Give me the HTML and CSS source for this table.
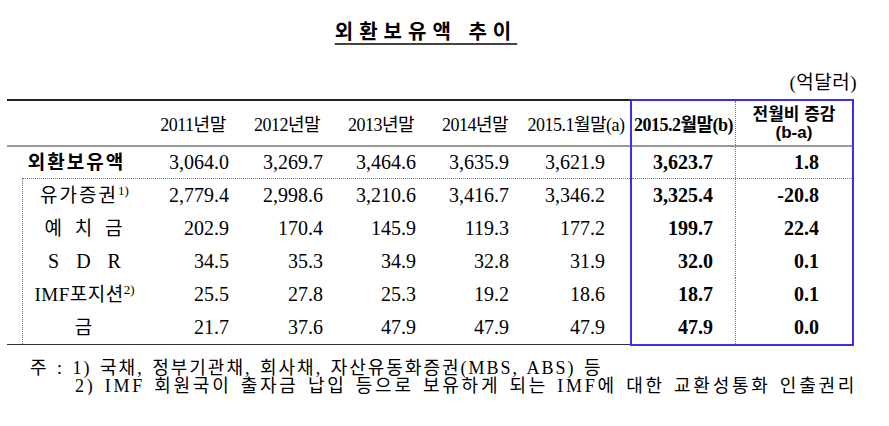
FILE: index.html
```html
<!DOCTYPE html>
<html lang="ko">
<head>
<meta charset="utf-8">
<title>외환보유액 추이</title>
<link rel="stylesheet" href="styles.css">
</head>
<body>
<div class="page">
  <h1 class="title"><span>외환보유액 추이</span></h1>
  <div class="unit">(억달러)</div>
  <div class="table">
    <div class="main">
      <div class="row head">
        <div class="cell"></div>
        <div class="cell hd">2011년말</div>
        <div class="cell hd">2012년말</div>
        <div class="cell hd">2013년말</div>
        <div class="cell hd">2014년말</div>
        <div class="cell hd">2015.1월말(a)</div>
      </div>
      <div class="row total">
        <div class="cell label strong">외환보유액</div>
        <div class="cell num">3,064.0</div>
        <div class="cell num">3,269.7</div>
        <div class="cell num">3,464.6</div>
        <div class="cell num">3,635.9</div>
        <div class="cell num">3,621.9</div>
      </div>
      <div class="sub">
        <div class="row">
          <div class="cell label">유가증권<sup>1)</sup></div>
          <div class="cell num">2,779.4</div>
          <div class="cell num">2,998.6</div>
          <div class="cell num">3,210.6</div>
          <div class="cell num">3,416.7</div>
          <div class="cell num">3,346.2</div>
        </div>
        <div class="row">
          <div class="cell label spaced">예 치 금</div>
          <div class="cell num">202.9</div>
          <div class="cell num">170.4</div>
          <div class="cell num">145.9</div>
          <div class="cell num">119.3</div>
          <div class="cell num">177.2</div>
        </div>
        <div class="row">
          <div class="cell label sdr">S D R</div>
          <div class="cell num">34.5</div>
          <div class="cell num">35.3</div>
          <div class="cell num">34.9</div>
          <div class="cell num">32.8</div>
          <div class="cell num">31.9</div>
        </div>
        <div class="row">
          <div class="cell label imf">IMF포지션<sup>2)</sup></div>
          <div class="cell num">25.5</div>
          <div class="cell num">27.8</div>
          <div class="cell num">25.3</div>
          <div class="cell num">19.2</div>
          <div class="cell num">18.6</div>
        </div>
        <div class="row">
          <div class="cell label">금</div>
          <div class="cell num">21.7</div>
          <div class="cell num">37.6</div>
          <div class="cell num">47.9</div>
          <div class="cell num">47.9</div>
          <div class="cell num">47.9</div>
        </div>
      </div>
    </div>
    <div class="side">
      <div class="row head">
        <div class="cell hd hb">2015.2월말(b)</div>
        <div class="cell hs"><span>전월비 증감<br>(b-a)</span></div>
      </div>
      <div class="row total">
        <div class="cell num b">3,623.7</div>
        <div class="cell num b">1.8</div>
      </div>
      <div class="sub">
        <div class="row">
          <div class="cell num b">3,325.4</div>
          <div class="cell num b">-20.8</div>
        </div>
        <div class="row">
          <div class="cell num b">199.7</div>
          <div class="cell num b">22.4</div>
        </div>
        <div class="row">
          <div class="cell num b">32.0</div>
          <div class="cell num b">0.1</div>
        </div>
        <div class="row">
          <div class="cell num b">18.7</div>
          <div class="cell num b">0.1</div>
        </div>
        <div class="row">
          <div class="cell num b">47.9</div>
          <div class="cell num b">0.0</div>
        </div>
      </div>
    </div>
  </div>
  <div class="notes">
    <p class="n1">주 : 1) 국채, 정부기관채, 회사채, 자산유동화증권(MBS, ABS) 등</p>
    <p class="n2">2) IMF 회원국이 출자금 납입 등으로 보유하게 되는 IMF에 대한 교환성통화 인출권리</p>
  </div>
</div>
</body>
</html>
```
FILE: styles.css
```css
body {
  margin: 0;
  background: #fff;
  color: #000;
  font-family: "Liberation Serif", "Noto Sans CJK KR", serif;
}
.page {
  padding-left: 7px;
}
.title {
  margin: 19px 0 0;
  width: 838px;
  height: 24px;
  font: bold 20px/24px "Noto Sans CJK KR", sans-serif;
  letter-spacing: 6px;
  text-align: center;
}
.title span {
  text-decoration: underline;
  text-decoration-thickness: 1.5px;
  text-underline-offset: 4px;
  text-decoration-color: #444;
}
.unit {
  margin-top: 29px;
  width: 850px;
  height: 22px;
  line-height: 22px;
  font-size: 19px;
  letter-spacing: 0.5px;
  text-align: right;
}
.table {
  display: flex;
  align-items: flex-start;
  margin-top: 5px;
}
.main {
  width: 623px;
  border-top: 2px solid #222;
  border-bottom: 1px solid #333;
}
.side {
  width: 220px;
  border: 2px solid #3b30f2;
}
.row {
  display: grid;
}
.main .row {
  grid-template-columns: 139px 94px 94px 94px 94px 108px;
}
.main .sub {
  margin-left: 15px;
  border-left: 1px dotted #777;
  border-top: 1px dotted #777;
}
.main .sub .row {
  grid-template-columns: 123px 94px 94px 94px 94px 108px;
}
.side .row {
  grid-template-columns: 104px 116px;
}
.side .cell:first-child {
  border-right: 1px dotted #777;
}
.side .sub {
  border-top: 1px dotted #777;
}
.head {
  height: 44px;
  border-bottom: 2px solid #999;
}
.head .cell {
  display: flex;
  align-items: center;
  justify-content: center;
  white-space: nowrap;
}
.hd {
  font-size: 18px;
  letter-spacing: -0.5px;
}
.hb {
  font-weight: bold;
}
.hs {
  font: bold 17px/18px "Liberation Sans", "Noto Sans CJK KR", sans-serif;
  text-align: center;
}
.hs span {
  padding-top: 2px;
}
.total .cell {
  height: 31px;
  line-height: 31px;
}
.sub .cell {
  height: 33px;
  line-height: 33px;
}
.cell {
  white-space: nowrap;
}
.num {
  font-size: 20px;
  text-align: right;
  padding-right: 11px;
}
.main .num:nth-child(4) {
  padding-right: 12px;
}
.main .num:nth-child(5) {
  padding-right: 13px;
}
.main .num:nth-child(6) {
  padding-right: 25px;
}
.side .num:first-child {
  padding-right: 22px;
}
.side .num:last-child {
  padding-right: 33px;
}
.b {
  font-weight: bold;
}
.label {
  text-align: center;
  font-size: 19px;
  letter-spacing: 2px;
}
.strong {
  font-weight: bold;
  letter-spacing: 2px;
}
.spaced {
  word-spacing: 4px;
}
.sdr {
  font-size: 20px;
  letter-spacing: 0;
  word-spacing: 12px;
}
.imf {
  letter-spacing: 0.5px;
}
sup {
  font-size: 13px;
  line-height: 0;
  vertical-align: 7px;
  letter-spacing: 0;
}
.notes {
  margin-top: 13px;
  font-size: 18px;
  line-height: 18px;
  word-spacing: 2px;
}
.notes p {
  margin: 0;
  white-space: nowrap;
}
.n1 {
  padding-left: 23px;
  letter-spacing: 2px;
}
.n2 {
  padding-left: 68px;
  letter-spacing: 2.75px;
}
```
